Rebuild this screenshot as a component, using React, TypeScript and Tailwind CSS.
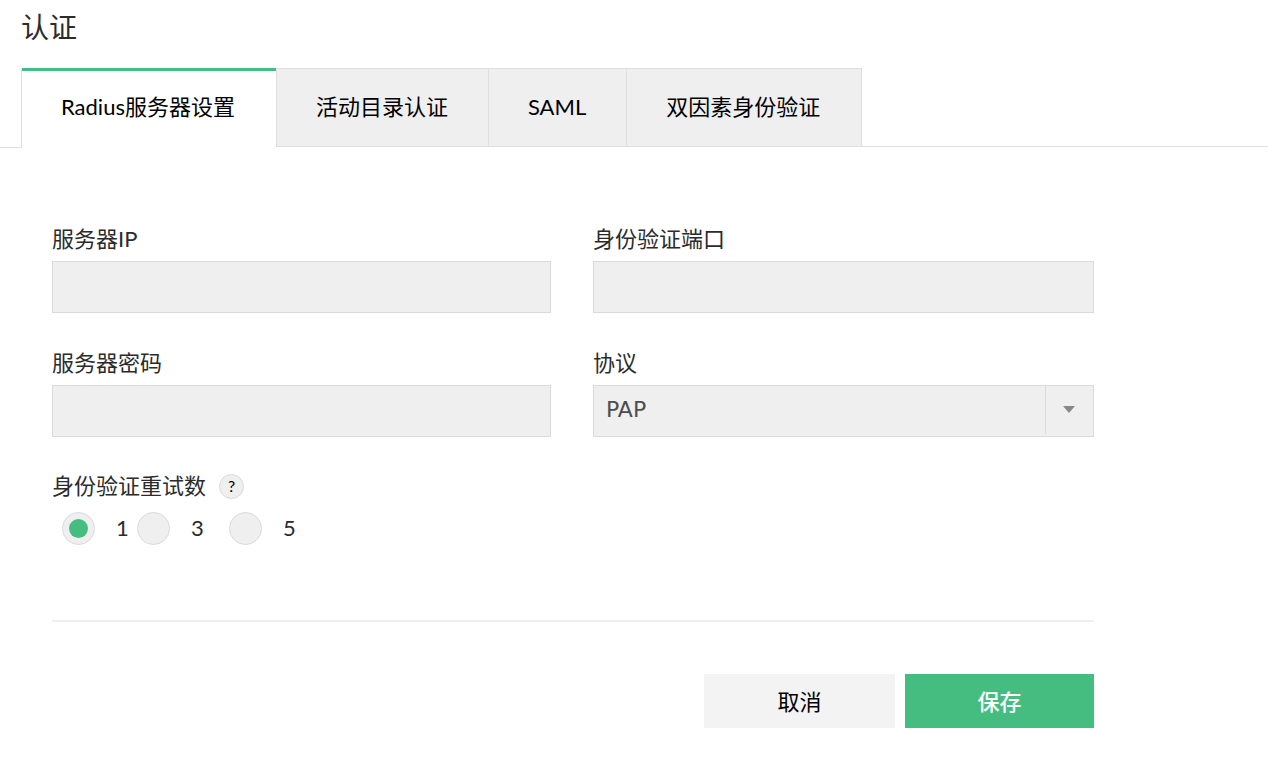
import { useState } from 'react';

const tabs = ['Radius服务器设置', '活动目录认证', 'SAML', '双因素身份验证'];

const retries = [
  { value: '1', width: 'w-[75px]' },
  { value: '3', width: 'w-[92px]' },
  { value: '5', width: 'w-[75px]' },
];

const fieldClass =
  'h-[52px] w-full rounded-none border border-[#dadada] bg-[#efefef] px-3 outline-none focus:border-[#45bd80]';

function TextField({ id, label, type = 'text' }: { id: string; label: string; type?: string }) {
  return (
    <div>
      <label htmlFor={id} className="mb-1 block leading-9">
        {label}
      </label>
      <input id={id} type={type} className={fieldClass} />
    </div>
  );
}

export default function App() {
  const [active, setActive] = useState(0);

  return (
    <main className="bg-white pb-7 font-['Lato','Noto_Sans_CJK_SC',sans-serif] text-[22px] text-[#2b2b2b]">
      <h1 className="px-[21px] pt-2 pb-[22px] text-[28px] leading-[38px]">认证</h1>

      <div role="tablist" className="flex">
        <span className="h-20 w-[21px] border-b border-[#dfdfdf]" />
        {tabs.map((tab, i) => (
          <button
            key={tab}
            type="button"
            role="tab"
            aria-selected={active === i}
            onClick={() => setActive(i)}
            className={
              active === i
                ? 'relative h-20 border-l border-[#dfdfdf] bg-white pr-[41px] pb-1 pl-[39px] text-black before:absolute before:inset-x-0 before:top-0 before:h-[3px] before:bg-[#45bd80]'
                : 'h-[79px] border-y border-l border-[#dfdfdf] bg-[#efefef] pr-10 pb-0.5 pl-[39px] text-black last-of-type:border-r last-of-type:pr-[41px]'
            }
          >
            {tab}
          </button>
        ))}
        <span className="h-[79px] flex-1 border-b border-[#dfdfdf]" />
      </div>

      <form className="ml-[52px] max-w-[1042px] pt-[73px]" onSubmit={(e) => e.preventDefault()}>
        <div className="grid grid-cols-[499fr_501fr] gap-x-[42px] gap-y-8">
          <TextField id="server-ip" label="服务器IP" />
          <TextField id="auth-port" label="身份验证端口" />
          <TextField id="server-secret" label="服务器密码" type="password" />
          <div>
            <label htmlFor="protocol" className="mb-1 block leading-9">
              协议
            </label>
            <div className="relative">
              <select
                id="protocol"
                className={`${fieldClass} appearance-none pb-1 font-['DejaVu_Sans',sans-serif] text-[#4d4d4d]`}
              >
                <option>PAP</option>
                <option>CHAP</option>
                <option>MSCHAP</option>
                <option>MSCHAP2</option>
              </select>
              <span className="pointer-events-none absolute top-0 right-px flex h-[49px] w-12 items-center justify-center border-l border-[#dadada] pr-0.5">
                <svg width="12" height="7" viewBox="0 0 12 7" fill="#888888" aria-hidden="true">
                  <path d="M0 0h12L6 7z" />
                </svg>
              </span>
            </div>
          </div>
        </div>

        <fieldset className="mt-[31px]">
          <legend className="flex items-center gap-[13px] leading-9">
            身份验证重试数
            <button
              type="button"
              className="size-[25px] rounded-full border border-[#dadada] bg-[#efefef] text-base leading-[22px] text-black"
            >
              ?
            </button>
          </legend>
          <div className="mt-2 ml-[10px] flex">
            {retries.map(({ value, width }) => (
              <label key={value} className={`${width} flex items-start gap-[21px] leading-8`}>
                <input
                  type="radio"
                  name="retries"
                  value={value}
                  defaultChecked={value === '1'}
                  className="grid size-[33px] shrink-0 appearance-none place-content-center rounded-full border border-[#dadada] bg-[#efefef] before:size-[19px] before:rounded-full checked:before:bg-[#45bd80]"
                />
                {value}
              </label>
            ))}
          </div>
        </fieldset>

        <div className="mt-[75px] flex justify-end gap-[10px] border-t-2 border-[#efefef] pt-[52px]">
          <button type="button" className="h-[54px] w-[191px] bg-[#f3f3f3] text-black">
            取消
          </button>
          <button type="submit" className="h-[54px] w-[189px] bg-[#45bd80] font-medium text-white">
            保存
          </button>
        </div>
      </form>
    </main>
  );
}
